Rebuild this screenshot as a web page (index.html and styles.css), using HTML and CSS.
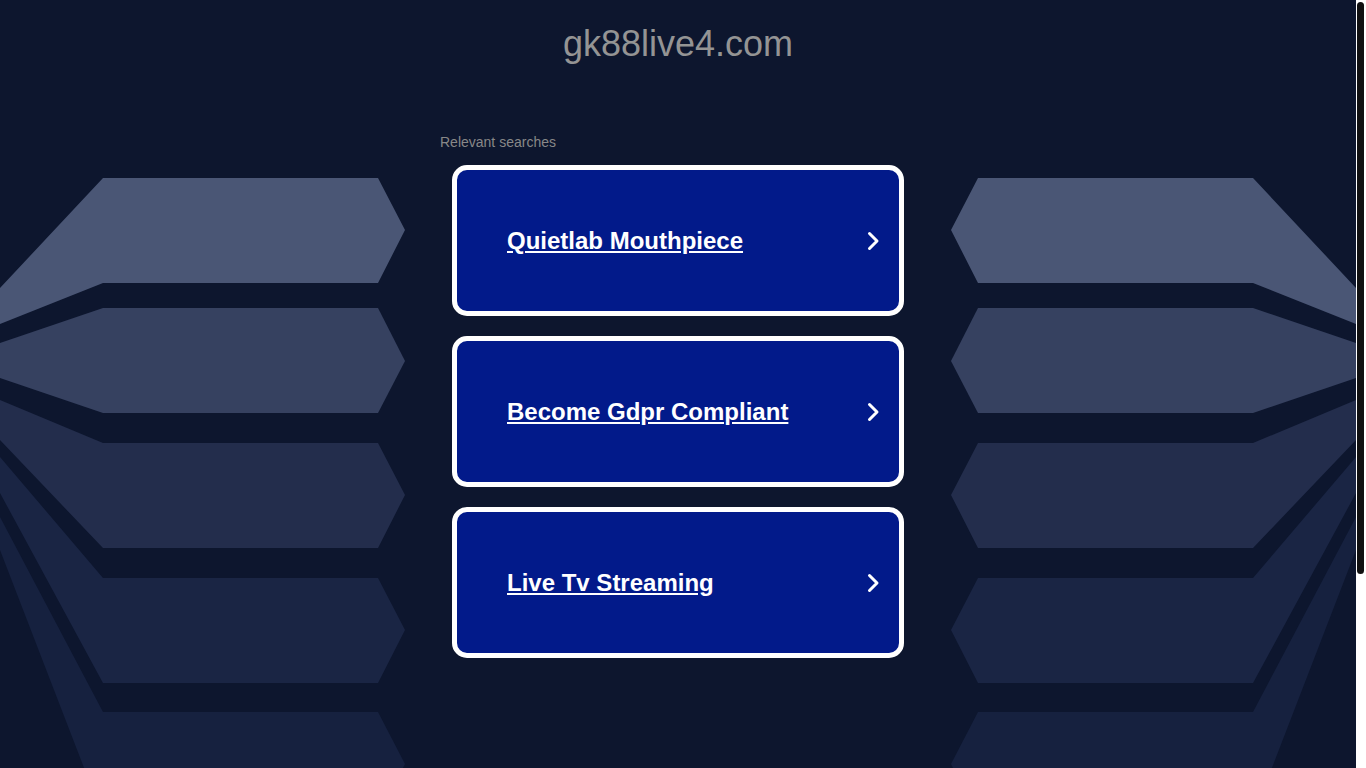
FILE: index.html
```html
<!DOCTYPE html>
<html lang="en">
<head>
<meta charset="utf-8">
<title>gk88live4.com</title>
<link rel="stylesheet" href="styles.css">
</head>
<body>
<div class="viewport">
  <div class="backdrop" aria-hidden="true">
    <svg class="fan fan-left" width="405" height="830" viewBox="0 0 405 830">
      <polygon class="s1" points="0,288 103,178 378,178 405,230 378,283 103,283 0,324"/>
      <polygon class="s2" points="0,343 103,308 378,308 405,361 378,413 103,413 0,378"/>
      <polygon class="s3" points="0,400 103,443 378,443 405,495 378,548 103,548 0,440"/>
      <polygon class="s4" points="0,457 103,578 378,578 405,630 378,683 103,683 0,493"/>
      <polygon class="s5" points="0,517 103,712 378,712 405,764 378,817 103,817 0,550"/>
    </svg>
    <svg class="fan fan-right" width="405" height="830" viewBox="0 0 405 830">
      <polygon class="s1" points="0,288 103,178 378,178 405,230 378,283 103,283 0,324"/>
      <polygon class="s2" points="0,343 103,308 378,308 405,361 378,413 103,413 0,378"/>
      <polygon class="s3" points="0,400 103,443 378,443 405,495 378,548 103,548 0,440"/>
      <polygon class="s4" points="0,457 103,578 378,578 405,630 378,683 103,683 0,493"/>
      <polygon class="s5" points="0,517 103,712 378,712 405,764 378,817 103,817 0,550"/>
    </svg>
  </div>
  <div class="page">
    <h1 class="domain">gk88live4.com</h1>
    <div class="searches">
      <div class="searches-label">Relevant searches</div>
      <div class="cards">
        <a class="card" href="#"><span class="card-text">Quietlab Mouthpiece</span><svg class="chev" width="14" height="20" viewBox="0 0 14 20"><path d="M3.5 2.5 L11 10 L3.5 17.5"/></svg></a>
        <a class="card" href="#"><span class="card-text">Become Gdpr Compliant</span><svg class="chev" width="14" height="20" viewBox="0 0 14 20"><path d="M3.5 2.5 L11 10 L3.5 17.5"/></svg></a>
        <a class="card" href="#"><span class="card-text">Live Tv Streaming</span><svg class="chev" width="14" height="20" viewBox="0 0 14 20"><path d="M3.5 2.5 L11 10 L3.5 17.5"/></svg></a>
      </div>
    </div>
  </div>
</div>
<div class="scrollbar" aria-hidden="true"><div class="scrollbar-thumb"></div></div>
</body>
</html>
```

FILE: styles.css
```css
html {
  background: #0d162e;
}
body {
  margin: 0;
  height: 768px;
  overflow: hidden;
  display: flex;
  font-family: "Liberation Sans", Arial, sans-serif;
  background: #0d162e;
}
.viewport {
  flex: 1;
  position: relative;
  height: 768px;
  overflow: hidden;
}
.backdrop {
  position: absolute;
  left: 0;
  right: 0;
  top: 0;
  bottom: 0;
  overflow: hidden;
  z-index: 0;
}
.fan {
  position: absolute;
  top: 0;
  display: block;
}
.fan-left {
  left: 0;
}
.fan-right {
  right: 0;
  transform: scaleX(-1);
}
.s1 { fill: #4a5675; }
.s2 { fill: #364160; }
.s3 { fill: #232d4c; }
.s4 { fill: #1a2544; }
.s5 { fill: #16213f; }

.page {
  position: relative;
  z-index: 1;
  display: flex;
  flex-direction: column;
  align-items: center;
  padding-top: 23px;
}
.domain {
  margin: 0;
  font-size: 36px;
  font-weight: normal;
  line-height: normal;
  color: #949494;
  text-align: center;
}
.searches {
  width: 476px;
  margin-top: 69px;
}
.searches-label {
  font-size: 14px;
  line-height: 16px;
  color: #888888;
}
.cards {
  display: flex;
  flex-direction: column;
  gap: 20px;
  margin: 15px 12px 0;
}
.card {
  box-sizing: border-box;
  height: 151px;
  display: flex;
  align-items: center;
  justify-content: space-between;
  padding: 0 19px 0 50px;
  background: #021a8a;
  border: 5px solid #ffffff;
  border-radius: 15px;
  color: #ffffff;
  text-decoration: none;
}
.card-text {
  font-size: 24px;
  font-weight: bold;
  line-height: normal;
  text-decoration: underline;
  color: #ffffff;
}
.chev {
  display: block;
  flex: none;
}
.chev path {
  fill: none;
  stroke: #ffffff;
  stroke-width: 3;
  stroke-linecap: round;
  stroke-linejoin: round;
}
.scrollbar {
  flex: none;
  width: 10px;
  height: 768px;
  background: #ffffff;
  box-sizing: border-box;
  padding: 2px 2px 0 1px;
}
.scrollbar-thumb {
  height: 572px;
  background: #111111;
  border-radius: 4px;
}
```
